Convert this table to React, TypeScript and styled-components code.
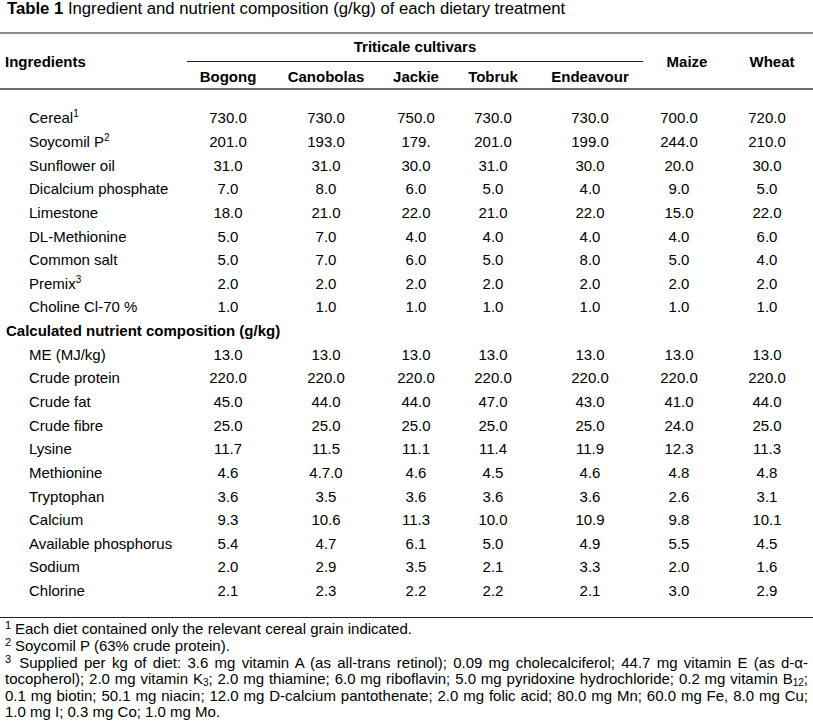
import React from "react";
import styled, { createGlobalStyle } from "styled-components";

const GlobalStyle = createGlobalStyle`
  html, body { margin: 0; padding: 0; background: #ffffff; }
  body { font-family: "Liberation Sans", Arial, sans-serif; color: #000; }
`;

const Page = styled.div`
  width: 813px;
  font-size: 15px;
`;

const Title = styled.div`
  padding-left: 7px;
  font-size: 16.7px;
  line-height: 17px;
  margin-bottom: 15px;
  white-space: nowrap;
`;

const TitleLabel = styled.b`
  font-weight: bold;
`;

const Table = styled.table`
  width: 813px;
  table-layout: fixed;
  border-collapse: collapse;
  border-spacing: 0;
  font-size: 15px;
`;

const Head = styled.thead`
  border-top: 2px solid #8a8a8a;
  border-bottom: 2px solid #6e6e6e;
`;

const HeadRow = styled.tr<{ $h: number }>`
  height: ${(p) => p.$h}px;
`;

const HeadCell = styled.th<{ $left?: boolean; $rule?: boolean; $top?: number; $bottom?: number }>`
  padding: ${(p) => p.$top ?? 0}px 0 ${(p) => p.$bottom ?? 0}px ${(p) => (p.$left ? 5 : 0)}px;
  text-align: ${(p) => (p.$left ? "left" : "center")};
  font-weight: bold;
  vertical-align: middle;
  white-space: nowrap;
  border-bottom: ${(p) => (p.$rule ? "1px solid #222" : "none")};
`;

const GapRow = styled.tr<{ $h: number }>`
  height: ${(p) => p.$h}px;
`;

const BodyRow = styled.tr`
  height: 23.65px;
`;

const Label = styled.td`
  padding: 0 0 0 29px;
  text-align: left;
  white-space: nowrap;
  vertical-align: middle;
`;

const Section = styled.td`
  padding: 0 0 0 6px;
  text-align: left;
  font-weight: bold;
  white-space: nowrap;
  vertical-align: middle;
`;

const Value = styled.td<{ $shift: number }>`
  padding: 0 ${(p) => p.$shift}px 0 0;
  text-align: center;
  white-space: nowrap;
  vertical-align: middle;
`;

const Sup = styled.sup`
  font-size: 10px;
  line-height: 0;
  vertical-align: 6px;
`;

const Footnotes = styled.div`
  border-top: 1px solid #222;
  padding: 3px 5px 0 5px;
  line-height: 16.6px;
  font-size: 15px;
`;

const FootLine = styled.div<{ $justify?: boolean }>`
  white-space: ${(p) => (p.$justify ? "normal" : "nowrap")};
  text-align: ${(p) => (p.$justify ? "justify" : "left")};
  text-align-last: ${(p) => (p.$justify ? "justify" : "left")};
`;

const FootSup = styled.sup<{ $w?: number }>`
  display: inline-block;
  width: ${(p) => p.$w ?? 10}px;
  font-size: 11px;
  line-height: 0;
  vertical-align: 5px;
`;

const Sub = styled.sub`
  font-size: 10px;
  line-height: 0;
  vertical-align: -2px;
`;

const widths = [187, 82, 114, 66, 88, 106, 88, 82];
const shifts = [0, 0, 0, 0, 0, 16, 10];

type Row = { label: React.ReactNode; values: string[] };

const ingredients: Row[] = [
  { label: <>Cereal<Sup>1</Sup></>, values: ["730.0", "730.0", "750.0", "730.0", "730.0", "700.0", "720.0"] },
  { label: <>Soycomil P<Sup>2</Sup></>, values: ["201.0", "193.0", "179.", "201.0", "199.0", "244.0", "210.0"] },
  { label: "Sunflower oil", values: ["31.0", "31.0", "30.0", "31.0", "30.0", "20.0", "30.0"] },
  { label: "Dicalcium phosphate", values: ["7.0", "8.0", "6.0", "5.0", "4.0", "9.0", "5.0"] },
  { label: "Limestone", values: ["18.0", "21.0", "22.0", "21.0", "22.0", "15.0", "22.0"] },
  { label: "DL-Methionine", values: ["5.0", "7.0", "4.0", "4.0", "4.0", "4.0", "6.0"] },
  { label: "Common salt", values: ["5.0", "7.0", "6.0", "5.0", "8.0", "5.0", "4.0"] },
  { label: <>Premix<Sup>3</Sup></>, values: ["2.0", "2.0", "2.0", "2.0", "2.0", "2.0", "2.0"] },
  { label: "Choline Cl-70 %", values: ["1.0", "1.0", "1.0", "1.0", "1.0", "1.0", "1.0"] },
];

const nutrients: Row[] = [
  { label: "ME (MJ/kg)", values: ["13.0", "13.0", "13.0", "13.0", "13.0", "13.0", "13.0"] },
  { label: "Crude protein", values: ["220.0", "220.0", "220.0", "220.0", "220.0", "220.0", "220.0"] },
  { label: "Crude fat", values: ["45.0", "44.0", "44.0", "47.0", "43.0", "41.0", "44.0"] },
  { label: "Crude fibre", values: ["25.0", "25.0", "25.0", "25.0", "25.0", "24.0", "25.0"] },
  { label: "Lysine", values: ["11.7", "11.5", "11.1", "11.4", "11.9", "12.3", "11.3"] },
  { label: "Methionine", values: ["4.6", "4.7.0", "4.6", "4.5", "4.6", "4.8", "4.8"] },
  { label: "Tryptophan", values: ["3.6", "3.5", "3.6", "3.6", "3.6", "2.6", "3.1"] },
  { label: "Calcium", values: ["9.3", "10.6", "11.3", "10.0", "10.9", "9.8", "10.1"] },
  { label: "Available phosphorus", values: ["5.4", "4.7", "6.1", "5.0", "4.9", "5.5", "4.5"] },
  { label: "Sodium", values: ["2.0", "2.9", "3.5", "2.1", "3.3", "2.0", "1.6"] },
  { label: "Chlorine", values: ["2.1", "2.3", "2.2", "2.2", "2.1", "3.0", "2.9"] },
];

const DataRow = ({ row }: { row: Row }) => (
  <BodyRow>
    <Label>{row.label}</Label>
    {row.values.map((v, i) => (
      <Value key={i} $shift={shifts[i]}>
        {v}
      </Value>
    ))}
  </BodyRow>
);

export default function App() {
  return (
    <Page>
      <GlobalStyle />
      <Title>
        <TitleLabel>Table 1</TitleLabel> Ingredient and nutrient composition (g/kg) of each dietary treatment
      </Title>
      <Table>
        <colgroup>
          {widths.map((w, i) => (
            <col key={i} style={{ width: w }} />
          ))}
        </colgroup>
        <Head>
          <HeadRow $h={28}>
            <HeadCell $left rowSpan={2}>Ingredients</HeadCell>
            <HeadCell colSpan={5} $rule $bottom={2}>Triticale cultivars</HeadCell>
            <HeadCell rowSpan={2}>Maize</HeadCell>
            <HeadCell rowSpan={2}>Wheat</HeadCell>
          </HeadRow>
          <HeadRow $h={28}>
            <HeadCell $top={3}>Bogong</HeadCell>
            <HeadCell $top={3}>Canobolas</HeadCell>
            <HeadCell $top={3}>Jackie</HeadCell>
            <HeadCell $top={3}>Tobruk</HeadCell>
            <HeadCell $top={3}>Endeavour</HeadCell>
          </HeadRow>
        </Head>
        <tbody>
          <GapRow $h={17}><td colSpan={8} /></GapRow>
          {ingredients.map((r, i) => (
            <DataRow key={`i${i}`} row={r} />
          ))}
          <BodyRow>
            <Section colSpan={8}>Calculated nutrient composition (g/kg)</Section>
          </BodyRow>
          {nutrients.map((r, i) => (
            <DataRow key={`n${i}`} row={r} />
          ))}
          <GapRow $h={15}><td colSpan={8} /></GapRow>
        </tbody>
      </Table>
      <Footnotes>
        <FootLine><FootSup>1</FootSup>Each diet contained only the relevant cereal grain indicated.</FootLine>
        <FootLine><FootSup>2</FootSup>Soycomil P (63% crude protein).</FootLine>
        <FootLine $justify>
          <FootSup $w={8}>3</FootSup> Supplied per kg of diet: 3.6 mg vitamin A (as all-trans retinol); 0.09 mg cholecalciferol; 44.7 mg vitamin E (as d-α-
        </FootLine>
        <FootLine $justify>
          tocopherol); 2.0 mg vitamin K<Sub>3</Sub>; 2.0 mg thiamine; 6.0 mg riboflavin; 5.0 mg pyridoxine hydrochloride; 0.2 mg vitamin B<Sub>12</Sub>;
        </FootLine>
        <FootLine $justify>
          0.1 mg biotin; 50.1 mg niacin; 12.0 mg D-calcium pantothenate; 2.0 mg folic acid; 80.0 mg Mn; 60.0 mg Fe, 8.0 mg Cu;
        </FootLine>
        <FootLine>1.0 mg I; 0.3 mg Co; 1.0 mg Mo.</FootLine>
      </Footnotes>
    </Page>
  );
}
